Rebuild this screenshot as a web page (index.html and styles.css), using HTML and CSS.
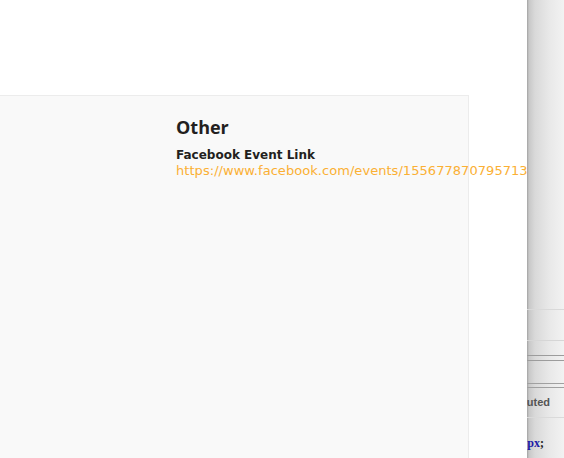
FILE: index.html
```html
<!DOCTYPE html>
<html lang="en">
<head>
    <meta charset="UTF-8">
    <meta name="viewport" content="width=device-width, initial-scale=1.0">
    <title>Event</title>
    <link rel="stylesheet" href="styles.css">
</head>
<body>
    <div class="page">
        <div class="panel">
            <div class="details">
                <h2>Other</h2>
                <div class="field">
                    <div class="field-label">Facebook Event Link</div>
                    <a class="field-link" href="#">https://www.facebook.com/events/155677870795713</a>
                </div>
            </div>
        </div>
    </div>
    <aside class="devtools">
        <div class="devtools-inner">
            <div class="dt-top"></div>
            <div class="dt-bar"></div>
            <div class="dt-filter"></div>
            <div class="dt-gap"></div>
            <div class="dt-sep"></div>
            <div class="dt-tabs">Computed</div>
            <div class="dt-code"><span class="prop">px</span>;</div>
        </div>
    </aside>
</body>
</html>
```

FILE: styles.css
```css
body {
    margin: 0;
    padding: 0;
    display: flex;
    height: 458px;
    overflow: hidden;
    background-color: #fff;
    font-family: "DejaVu Sans", sans-serif;
}
.page {
    flex: 1;
    overflow: hidden;
    padding-top: 95px;
}
.panel {
    width: 468px;
    height: 400px;
    background-color: #f9f9f9;
    border-top: 1px solid #ececec;
    border-right: 1px solid #ececec;
}
.details {
    padding: 18px 0 0 176px;
    white-space: nowrap;
}
.details h2 {
    margin: 0 0 8px;
    font-family: "Open Sans", sans-serif;
    font-size: 18px;
    font-weight: 700;
    color: #231f20;
    line-height: 26px;
}
.field-label {
    font-size: 12px;
    font-weight: bold;
    color: #231f20;
    line-height: 15px;
}
.field-link {
    display: block;
    font-size: 13px;
    letter-spacing: 0.05px;
    color: #fbb034;
    text-decoration: none;
    line-height: 16px;
}
.devtools {
    width: 37px;
    overflow: hidden;
    background: linear-gradient(to right, #a2a2a2 0, #c8c8c8 2px, #d9d9d9 8px, #e8e8e8 22px, #f2f2f2 37px);
}
.devtools-inner {
    width: 200px;
    margin-left: -163px;
    text-align: right;
}
.dt-top {
    height: 309px;
    border-bottom: 1px solid #d9d9d9;
}
.dt-bar {
    height: 30px;
    border-bottom: 1px solid #d6d6d6;
}
.dt-filter {
    height: 14px;
    border-bottom: 1px solid #9c9c9c;
}
.dt-gap {
    height: 4px;
    border-bottom: 1px solid #9c9c9c;
}
.dt-sep {
    height: 3px;
    margin-top: 22px;
    border-top: 1px solid #a0a0a0;
    border-bottom: 1px solid #a0a0a0;
}
.dt-tabs {
    height: 29px;
    border-bottom: 1px solid #dadada;
    padding-right: 14px;
    font-family: "Liberation Sans", sans-serif;
    font-size: 11px;
    font-weight: bold;
    color: #555;
    line-height: 29px;
}
.dt-code {
    padding: 17px 20px 0 0;
    font-family: "Liberation Serif", serif;
    font-size: 12px;
    font-weight: bold;
    line-height: 16px;
    color: #222;
}
.dt-code .prop {
    color: #1a1aa6;
}
```
